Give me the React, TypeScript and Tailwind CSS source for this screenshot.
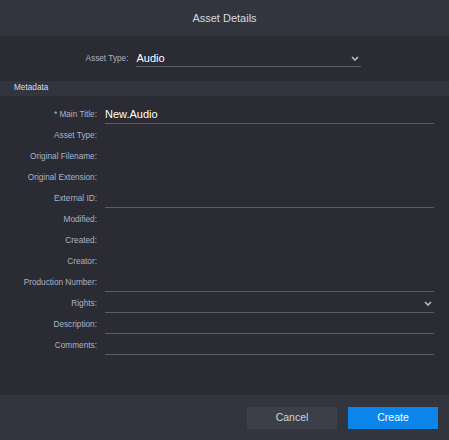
import React from "react";

const Chevron = ({ className = "" }: { className?: string }) => (
  <svg width="8" height="5" viewBox="0 0 8 5" className={className}>
    <path d="M1 1 L4 4 L7 1" fill="none" stroke="#b9bdca" strokeWidth="1.6" />
  </svg>
);

type Row = { label: string; value?: string; line?: boolean; select?: boolean; req?: boolean };

const rows: Row[] = [
  { label: "Main Title:", value: "New.Audio", line: true, req: true },
  { label: "Asset Type:" },
  { label: "Original Filename:" },
  { label: "Original Extension:" },
  { label: "External ID:", line: true },
  { label: "Modified:" },
  { label: "Created:" },
  { label: "Creator:" },
  { label: "Production Number:", line: true },
  { label: "Rights:", line: true, select: true },
  { label: "Description:", line: true },
  { label: "Comments:", line: true },
];

export default function App() {
  return (
    <div
      className="w-[449px] h-[440px] flex flex-col bg-[#2a2b33] overflow-hidden"
      style={{ fontFamily: '"Liberation Sans", Arial, sans-serif' }}
    >
      <div className="h-[36px] shrink-0 bg-[#32353d] flex items-center justify-center text-[11px] text-[#d6d9e2]">
        Asset Details
      </div>
      <div className="flex-1 flex flex-col">
        <div className="pt-[13px] flex justify-center">
          <div className="flex h-[18px] items-center ml-[-2px] pt-[2px]">
            <span className="text-[8.25px] text-[#a9b3c8] mr-[8px]">Asset Type:</span>
            <div className="w-[225px] h-[16px] border-b border-[#5c5d68] flex items-center justify-between pr-[2px]">
              <span className="text-[11px] text-white">Audio</span>
              <Chevron />
            </div>
          </div>
        </div>
        <div className="mt-[14px] h-[15px] bg-[#32353d] flex items-center pl-[14px] text-[8.25px] text-[#d3dcf0]">
          Metadata
        </div>
        <div className="mt-[8px] flex flex-col">
          {rows.map((r) => (
            <div key={r.label} className="flex h-[21px]">
              <div className="w-[97px] h-[21px] pt-[1px] flex items-center justify-end text-[8.25px] text-[#a9b3c8] whitespace-nowrap">
                {r.req ? "* " : ""}
                {r.label}
              </div>
              <div
                className={
                  "ml-[8px] w-[329px] h-[20px] pt-[1px] flex items-center justify-between pr-[2px] " +
                  (r.line ? "border-b border-[#5c5d68]" : "")
                }
              >
                <span className="text-[11px] text-white">{r.value ?? ""}</span>
                {r.select ? <Chevron /> : null}
              </div>
            </div>
          ))}
        </div>
      </div>
      <div className="h-[45px] shrink-0 bg-[#32353d] flex items-center justify-end gap-[11px] pr-[11px] pt-[1px]">
        <button className="w-[90px] h-[22px] bg-[#3c3f48] text-[10.5px] text-[#d0d3dc]">Cancel</button>
        <button className="w-[90px] h-[22px] bg-[#0b85ea] text-[10.5px] text-white">Create</button>
      </div>
    </div>
  );
}
